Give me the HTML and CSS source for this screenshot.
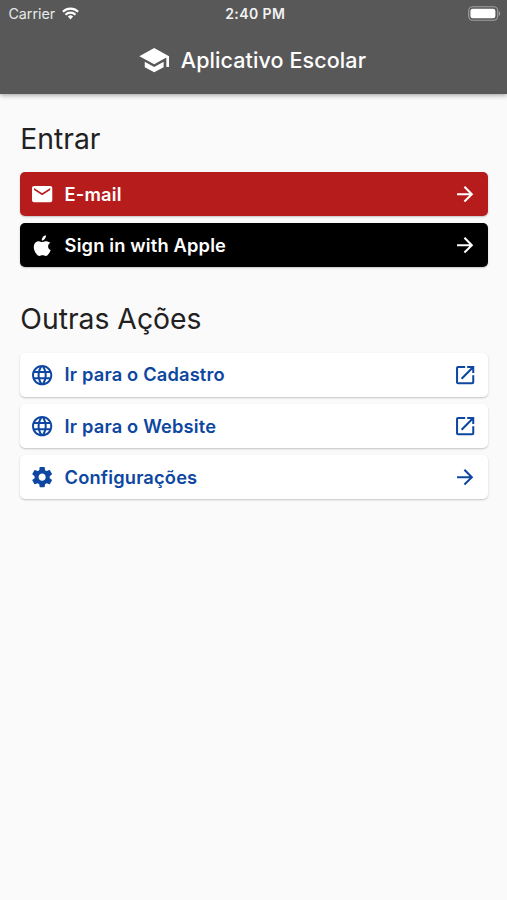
FILE: index.html
```html
<!DOCTYPE html>
<html lang="pt-BR">
<head>
<meta charset="utf-8">
<meta name="viewport" content="width=device-width, initial-scale=1">
<title>Aplicativo Escolar</title>
<link rel="stylesheet" href="styles.css">
</head>
<body>
<svg class="defs" aria-hidden="true">
  <symbol id="arrow" viewBox="0 0 24 24"><path d="M12 4l-1.41 1.41L16.17 11H4v2h12.17l-5.58 5.59L12 20l8-8z"/></symbol>
  <symbol id="open" viewBox="0 0 24 24"><path d="M19 19H5V5h7V3H5c-1.11 0-2 .9-2 2v14c0 1.1.89 2 2 2h14c1.1 0 2-.9 2-2v-7h-2v7zM14 3v2h3.59l-9.83 9.83 1.41 1.41L19 6.41V10h2V3h-7z"/></symbol>
  <symbol id="globe" viewBox="0 0 24 24"><path d="M11.99 2C6.47 2 2 6.48 2 12s4.47 10 9.99 10C17.52 22 22 17.52 22 12S17.52 2 11.99 2zm6.93 6h-2.95c-.32-1.25-.78-2.45-1.38-3.56 1.84.63 3.37 1.91 4.33 3.56zM12 4.04c.83 1.2 1.48 2.53 1.91 3.96h-3.82c.43-1.43 1.08-2.76 1.91-3.96zM4.26 14C4.1 13.36 4 12.69 4 12s.1-1.36.26-2h3.38c-.08.66-.14 1.32-.14 2s.06 1.34.14 2H4.26zm.82 2h2.95c.32 1.25.78 2.45 1.38 3.56-1.84-.63-3.37-1.9-4.33-3.56zm2.95-8H5.08c.96-1.66 2.49-2.93 4.33-3.56C8.81 5.55 8.35 6.75 8.03 8zM12 19.96c-.83-1.2-1.48-2.53-1.91-3.96h3.82c-.43 1.43-1.08 2.76-1.91 3.96zM14.34 14H9.66c-.09-.66-.16-1.32-.16-2s.07-1.35.16-2h4.68c.09.65.16 1.32.16 2s-.07 1.34-.16 2zm.25 5.56c.6-1.11 1.06-2.31 1.38-3.56h2.95c-.96 1.65-2.49 2.93-4.33 3.56zM16.36 14c.08-.66.14-1.32.14-2s-.06-1.34-.14-2h3.38c.16.64.26 1.31.26 2s-.1 1.36-.26 2h-3.38z"/></symbol>
</svg>
<header class="appbar">
  <div class="status">
    <div class="carrier"><span>Carrier</span>
      <svg class="wifi" viewBox="0 0 17 13"><path d="M8.5 12.4 5.9 9.5a3.8 3.8 0 0 1 5.2 0z"/><g fill="none" stroke="currentColor" stroke-width="2.2"><path d="M3.5 7.7a7 7 0 0 1 10 0"/><path d="M.9 4.7a11 11 0 0 1 15.2 0"/></g></svg>
    </div>
    <span class="time">2:40 PM</span>
    <svg class="battery" viewBox="0 0 33 15"><rect x=".7" y=".7" width="29" height="13.6" rx="4" fill="none" stroke="#a0a0a0" stroke-width="1.1"/><rect x="2.4" y="2.7" width="25" height="9.6" rx="2.4"/><path d="M30.9 5.2c1.7.7 1.7 3.9 0 4.6z" fill="#a0a0a0"/></svg>
  </div>
  <div class="brand">
    <svg class="school" viewBox="0 0 24 24"><path d="M5 13.18v4L12 21l7-3.82v-4L12 17l-7-3.82zM12 3L1 9l11 6 9-4.91V17h2V9L12 3z"/></svg>
    <h1>Aplicativo Escolar</h1>
  </div>
</header>
<main>
  <section>
    <h2>Entrar</h2>
    <nav class="list">
      <a class="row red"><svg class="icon" viewBox="0 0 24 24"><path d="M20 4H4c-1.1 0-1.99.9-1.99 2L2 18c0 1.1.9 2 2 2h16c1.1 0 2-.9 2-2V6c0-1.1-.9-2-2-2zm0 4l-8 5-8-5V6l8 5 8-5v2z"/></svg><span class="label">E-mail</span><svg class="icon"><use href="#arrow"/></svg></a>
      <a class="row black"><svg class="icon" viewBox="-.8 -1.2 25.6 25.6"><path d="M16 1.3c.1 1.4-.4 2.7-1.2 3.7-.8 1-2.1 1.7-3.2 1.6-.1-1.3.5-2.6 1.2-3.5.8-1 2.2-1.7 3.2-1.8zM20.6 9.2c-1.4.8-2.3 2-2.3 3.7 0 1.8 1.1 3.2 2.7 3.9-.5 1.6-1.3 3-2.3 4.2-.8 1.2-1.7 2-3 2-1.3 0-1.7-.7-3.300-.7s-2 .7-3.300.7c-1.300 0-2.200-1-3.100-2.200C4.300 18.900 3.200 16.300 3.200 13.700c0-4 2.500-6.200 5.200-6.200 1.400 0 2.500.9 3.400.9.900 0 2.200-1 3.800-1 1.900 0 3.900.7 5 1.800z"/></svg><span class="label">Sign in with Apple</span><svg class="icon"><use href="#arrow"/></svg></a>
    </nav>
  </section>
  <section>
    <h2>Outras Ações</h2>
    <nav class="list">
      <a class="row"><svg class="icon"><use href="#globe"/></svg><span class="label">Ir para o Cadastro</span><svg class="icon"><use href="#open"/></svg></a>
      <a class="row"><svg class="icon"><use href="#globe"/></svg><span class="label">Ir para o Website</span><svg class="icon"><use href="#open"/></svg></a>
      <a class="row"><svg class="icon" viewBox="0 0 24 24"><path d="M19.43 12.98c.04-.32.07-.64.07-.98s-.03-.66-.07-.98l2.11-1.65c.19-.15.24-.42.12-.64l-2-3.46c-.12-.22-.39-.3-.61-.22l-2.49 1c-.52-.4-1.08-.73-1.69-.98l-.38-2.65C14.46 2.18 14.25 2 14 2h-4c-.25 0-.46.18-.49.42l-.38 2.65c-.61.25-1.17.59-1.69.98l-2.49-1c-.23-.09-.49 0-.61.22l-2 3.46c-.13.22-.07.49.12.64l2.11 1.65c-.04.32-.07.65-.07.98s.03.66.07.98l-2.11 1.65c-.19.15-.24.42-.12.64l2 3.46c.12.22.39.3.61.22l2.49-1c.52.4 1.08.73 1.69.98l.38 2.65c.03.24.24.42.49.42h4c.25 0 .46-.18.49-.42l.38-2.65c.61-.25 1.17-.59 1.69-.98l2.49 1c.23.09.49 0 .61-.22l2-3.46c.12-.22.07-.49-.12-.64l-2.11-1.65zM12 15.5c-1.93 0-3.5-1.57-3.5-3.5s1.57-3.5 3.5-3.5 3.5 1.57 3.5 3.5-1.57 3.5-3.5 3.5z"/></svg><span class="label">Configurações</span><svg class="icon"><use href="#arrow"/></svg></a>
    </nav>
  </section>
</main>
</body>
</html>
```

FILE: styles.css
```css
* { box-sizing: border-box; }
body {
  margin: 0;
  min-height: 900px;
  background: #fafafa;
  color: #212121;
  font-family: Inter, "Liberation Sans", sans-serif;
}
svg { display: block; fill: currentColor; flex: none; }
.defs { display: none; }
.appbar {
  height: 93.5px;
  background: #585858;
  color: #fff;
  box-shadow: 0 1px 5px rgba(0, 0, 0, .4);
}
.status {
  display: grid;
  grid-template-columns: 1fr auto 1fr;
  align-items: center;
  height: 27px;
  padding: 0 6px 0 8.4px;
}
.carrier { display: flex; align-items: center; gap: 7px; font-size: 14.3px; color: #e8e8e8; }
.wifi { width: 17px; height: 13px; color: #fff; }
.time { padding-left: 1px; font-size: 14px; font-weight: 600; letter-spacing: .4px; color: #f2f2f2; }
.battery { width: 33px; height: 15px; justify-self: end; }
.brand { display: flex; align-items: center; justify-content: center; height: 66.5px; gap: 10.5px; padding-right: 3px; }
.school { width: 32.4px; height: 32.4px; }
h1 { margin: 0; font-size: 21.5px; line-height: 30px; font-weight: 500; letter-spacing: .1px; white-space: nowrap; }
main { padding: 27px 19.3px 0 20.3px; }
h2 { margin: 0; font-size: 28.3px; line-height: 36px; font-weight: 400; white-space: nowrap; }
section + section { margin-top: 34px; }
.list { display: flex; flex-direction: column; gap: 7.3px; margin-top: 15.5px; }
section + section .list { margin-top: 15.6px; }
.row {
  display: flex;
  align-items: center;
  height: 44px;
  padding: 0 10.4px 0 10px;
  border-radius: 5px;
  background: #fff;
  color: #0d47a1;
  box-shadow: 0 1px 2px rgba(0, 0, 0, .22);
}
.red { background: #b71c1c; color: #fff; }
.black { background: #000; color: #fff; }
.icon { width: 24.3px; height: 24.3px; }
.label { flex: 1; margin-left: 10px; padding-bottom: 1px; font-size: 18.3px; line-height: 24px; font-weight: 600; letter-spacing: .16px; white-space: nowrap; }
```
